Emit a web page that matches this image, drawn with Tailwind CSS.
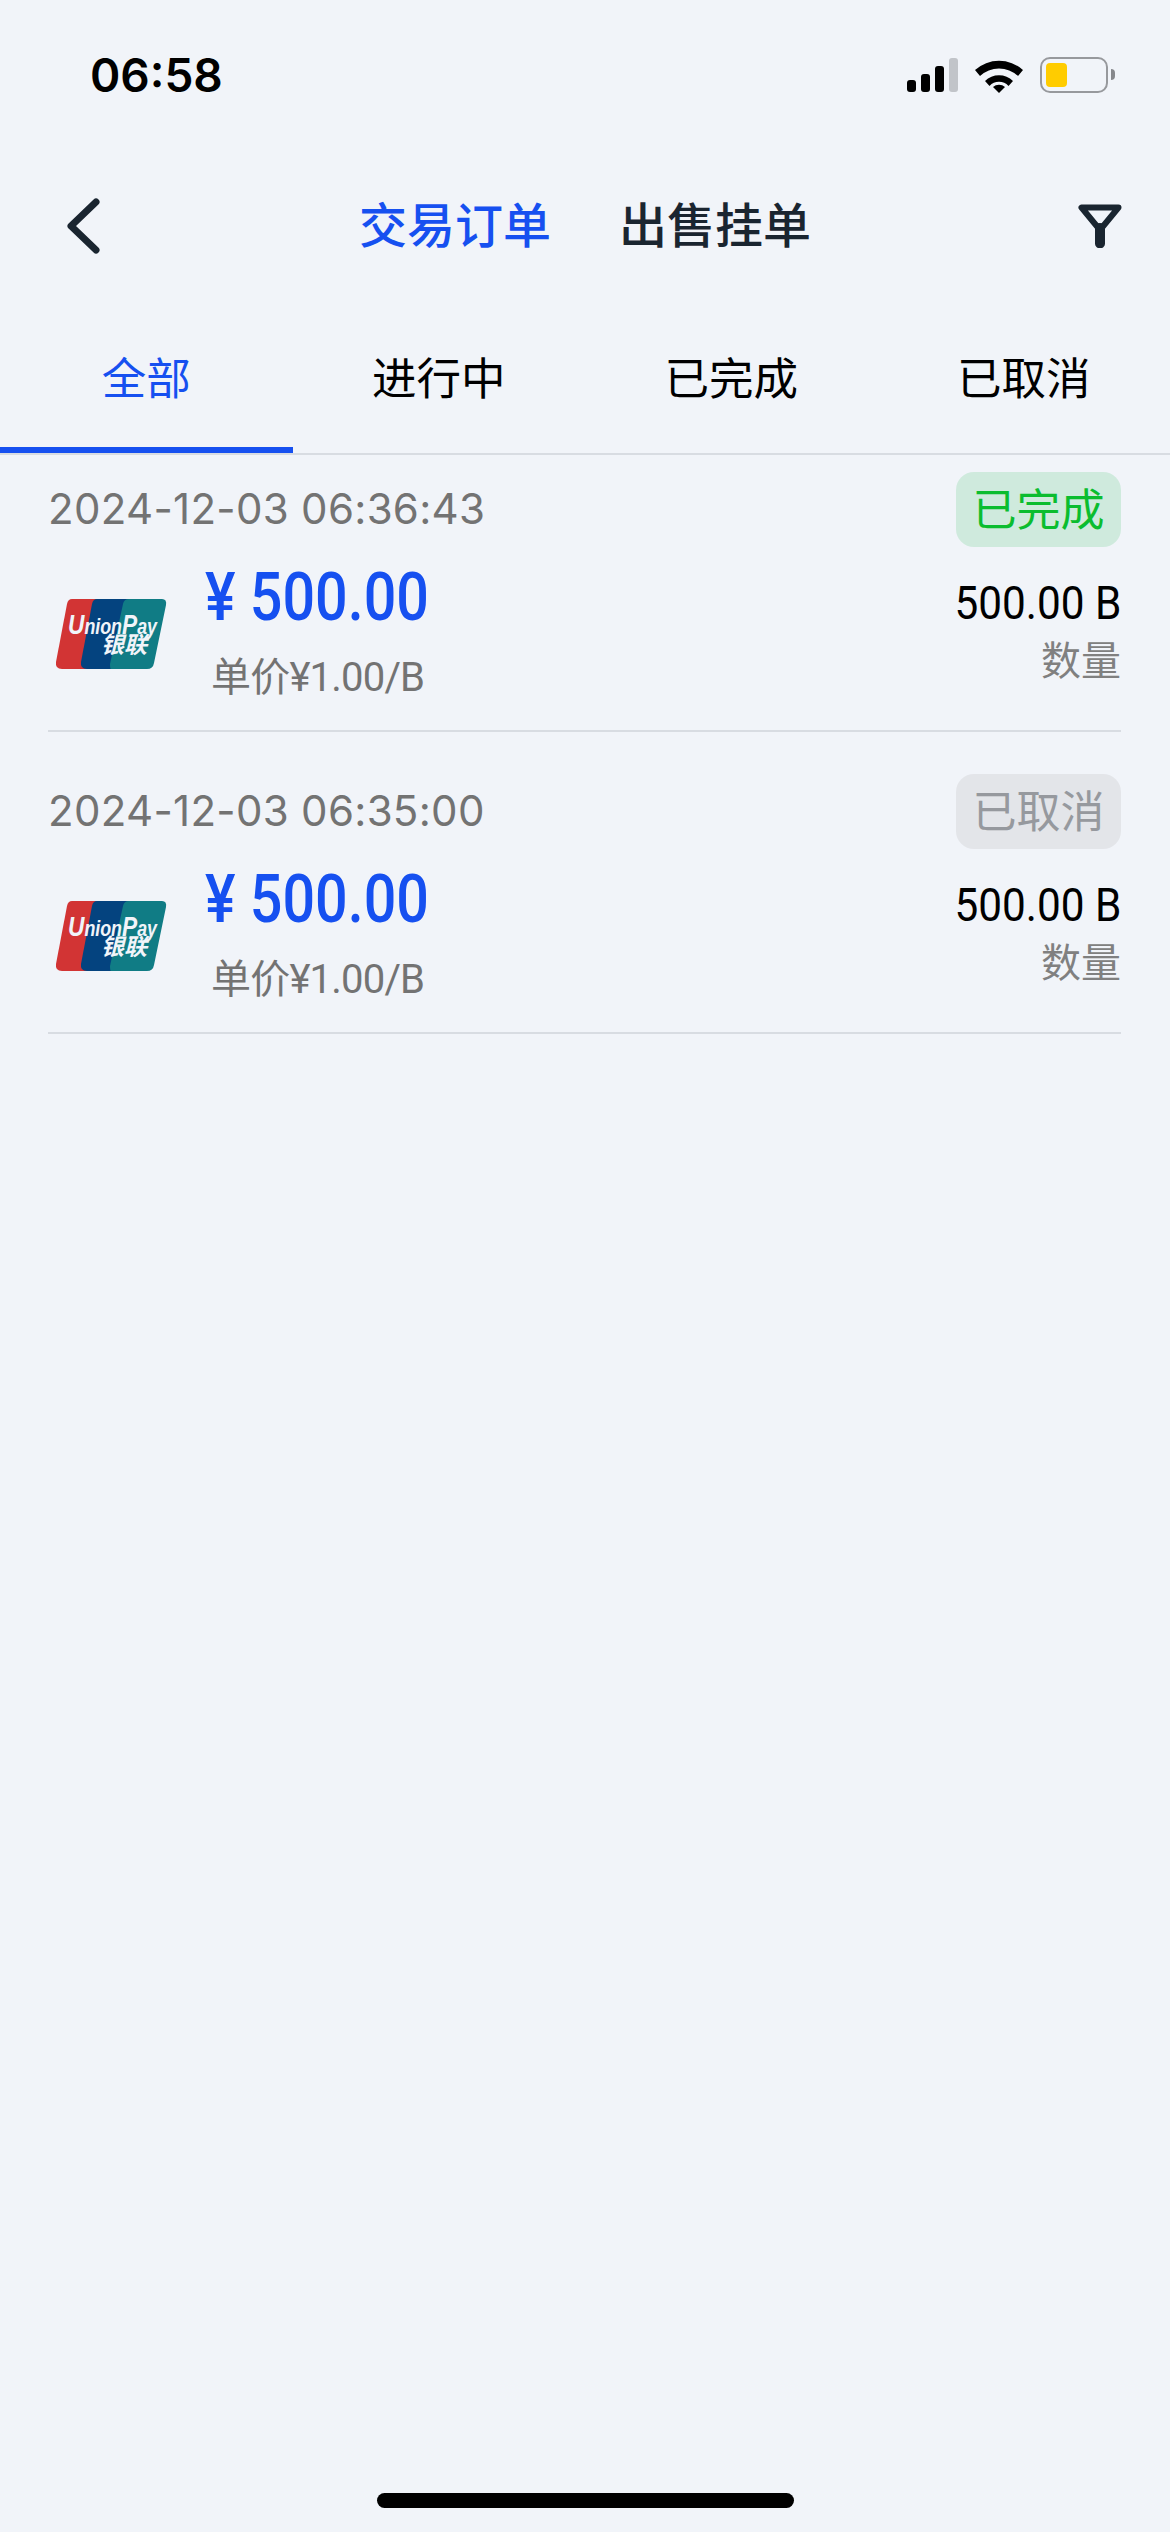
<!DOCTYPE html>
<html lang="zh-CN">
<head>
    <meta charset="UTF-8">
    <meta name="viewport" content="width=device-width, initial-scale=1.0">
    <title>交易订单</title>
    <script src="https://cdn.jsdelivr.net/npm/@tailwindcss/browser@4"></script>
</head>
<body class="relative w-[1170px] h-[2532px] overflow-hidden bg-[#f1f4f9] font-['Inter','Noto_Sans_CJK_SC',sans-serif]">

    <!-- 状态栏 -->
    <div class="flex items-center justify-between h-[150px] pl-[90px] pr-[55px] pb-[1px]">
        <span class="text-[46px] leading-none font-semibold text-black">06:58</span>
        <div class="flex items-center">
            <svg width="51" height="34" viewBox="0 0 51 34">
                <rect x="0" y="22" width="9" height="12" rx="3" fill="#000"/>
                <rect x="14" y="16" width="9" height="18" rx="3" fill="#000"/>
                <rect x="28" y="8" width="9" height="26" rx="3" fill="#000"/>
                <rect x="42" y="0" width="9" height="34" rx="3" fill="#c1c4c9"/>
            </svg>
            <svg class="ml-[17px]" width="48" height="36" viewBox="0 0 48 36">
                <path d="M0 13A36 36 0 0 1 48 13L43 19A28 28 0 0 0 5 19Z" fill="#000"/>
                <path d="M10 24A20 20 0 0 1 38 24L33.500 29A13 13 0 0 0 14.500 29Z" fill="#000"/>
                <path d="M24 36L18 30A9 9 0 0 1 30 30Z" fill="#000"/>
            </svg>
            <div class="flex items-center ml-[17px]">
                <div class="w-[68px] h-[36px] pl-[4px] py-[4px] border-[2px] border-[#97999d] rounded-[10px]">
                    <div class="w-[21px] h-full bg-[#ffcc00] rounded-[4px]"></div>
                </div>
                <div class="w-[4px] h-[11px] ml-[3px] bg-[#86888c] rounded-r-full"></div>
            </div>
        </div>
    </div>

    <!-- 标题栏 -->
    <div class="grid grid-cols-[1fr_auto_1fr] items-center h-[152px] pl-[67px] pr-[48px]">
        <svg width="33" height="56" viewBox="0 0 33 56" fill="none" stroke="#1a2530" stroke-width="7" stroke-linecap="round" stroke-linejoin="round">
            <path d="M29 4L4 28L29 52"/>
        </svg>
        <div class="flex items-center gap-[68px] mr-[19px] text-[48px] leading-none font-medium">
            <span class="text-[#1650f0]">交易订单</span>
            <span class="text-[#1a2530]">出售挂单</span>
        </div>
        <svg class="justify-self-end" width="44" height="44" viewBox="0 0 44 44" fill="none" stroke="#1a2530" stroke-width="6" stroke-linejoin="round" stroke-linecap="round">
            <path d="M3.500 3.500H40.500L22 26z"/>
            <path d="M22 24V39.500" stroke-width="10"/>
        </svg>
    </div>

    <!-- 状态筛选 -->
    <div class="grid grid-cols-4 h-[153px] border-b-[2px] border-[#d8dce2] text-[44.5px] text-black">
        <div class="flex items-center justify-center pt-[10px] border-b-[6px] border-[#1650f0] text-[#1650f0]">全部</div>
        <div class="flex items-center justify-center pt-[4px]">进行中</div>
        <div class="flex items-center justify-center pt-[4px]">已完成</div>
        <div class="flex items-center justify-center pt-[4px]">已取消</div>
    </div>

    <!-- 订单列表 -->
    <div class="pl-[48px] pr-[49px]">
        <div class="h-[277px] pt-[17px] border-b-[2px] border-[#d8dce2]">
            <div class="flex items-center justify-between">
                <span class="mb-[2px] text-[42px] leading-none tracking-[0.3px] text-[#737373]">2024-12-03 06:36:43</span>
                <span class="flex items-center justify-center w-[165px] h-[75px] rounded-[18px] bg-[#cfeadd] text-[44px] text-[#0bbd2f]">已完成</span>
            </div>
            <div class="flex items-start justify-between mt-[16px]">
                <div class="flex items-start">
                    <svg class="mt-[35px] ml-[7px] overflow-visible" width="112" height="72" viewBox="0 0 112 72">
                        <path d="M17 1H52L37 71H7Q0 71 1 64L12 6Q13 1 17 1Z" fill="#d23434"/>
                        <path d="M42 1H78L62 71H32Q25 71 26 64L37 6Q38 1 42 1Z" fill="#04437f"/>
                        <path d="M74 1H107Q112 1 111 7L99 65Q98 71 92 71H56Q55 71 55 66L68 6Q69 1 74 1Z" fill="#107c85"/>
                        <text x="13" y="36" fill="#f1f4f9" font-family="Liberation Sans" font-size="22" font-weight="700" font-style="italic" textLength="89" lengthAdjust="spacingAndGlyphs"><tspan font-size="28">U</tspan>nion<tspan font-size="28">P</tspan>ay</text>
                        <text x="46" y="55" fill="#f1f4f9" font-family="Noto Sans CJK SC" font-size="23" font-weight="700" font-style="italic">银联</text>
                    </svg>
                    <div class="ml-[38px]">
                        <div class="text-[66px] leading-none font-medium text-[#1650f0] font-['Roboto',sans-serif] scale-x-[0.87] origin-left mt-[2px] whitespace-nowrap">¥ 500.00</div>
                        <div class="text-[40px] leading-none tracking-[-0.8px] text-[#737373] font-['Roboto','Noto_Sans_CJK_SC',sans-serif] mt-[27px] ml-[6px]">单价¥1.00/B</div>
                    </div>
                </div>
                <div class="text-right">
                    <div class="text-[46px] leading-none font-[450] font-['Roboto',sans-serif] text-black scale-x-[0.92] origin-right mt-[17px] whitespace-nowrap">500.00 B</div>
                    <div class="text-[40px] leading-none text-[#808080] mt-[15px]">数量</div>
                </div>
            </div>
        </div>

        <div class="h-[302px] pt-[42px] border-b-[2px] border-[#d8dce2]">
            <div class="flex items-center justify-between">
                <span class="mb-[2px] text-[42px] leading-none tracking-[0.3px] text-[#737373]">2024-12-03 06:35:00</span>
                <span class="flex items-center justify-center w-[165px] h-[75px] rounded-[18px] bg-[#e3e5e9] text-[44px] text-[#96999e]">已取消</span>
            </div>
            <div class="flex items-start justify-between mt-[16px]">
                <div class="flex items-start">
                    <svg class="mt-[35px] ml-[7px] overflow-visible" width="112" height="72" viewBox="0 0 112 72">
                        <path d="M17 1H52L37 71H7Q0 71 1 64L12 6Q13 1 17 1Z" fill="#d23434"/>
                        <path d="M42 1H78L62 71H32Q25 71 26 64L37 6Q38 1 42 1Z" fill="#04437f"/>
                        <path d="M74 1H107Q112 1 111 7L99 65Q98 71 92 71H56Q55 71 55 66L68 6Q69 1 74 1Z" fill="#107c85"/>
                        <text x="13" y="36" fill="#f1f4f9" font-family="Liberation Sans" font-size="22" font-weight="700" font-style="italic" textLength="89" lengthAdjust="spacingAndGlyphs"><tspan font-size="28">U</tspan>nion<tspan font-size="28">P</tspan>ay</text>
                        <text x="46" y="55" fill="#f1f4f9" font-family="Noto Sans CJK SC" font-size="23" font-weight="700" font-style="italic">银联</text>
                    </svg>
                    <div class="ml-[38px]">
                        <div class="text-[66px] leading-none font-medium text-[#1650f0] font-['Roboto',sans-serif] scale-x-[0.87] origin-left mt-[2px] whitespace-nowrap">¥ 500.00</div>
                        <div class="text-[40px] leading-none tracking-[-0.8px] text-[#737373] font-['Roboto','Noto_Sans_CJK_SC',sans-serif] mt-[27px] ml-[6px]">单价¥1.00/B</div>
                    </div>
                </div>
                <div class="text-right">
                    <div class="text-[46px] leading-none font-[450] font-['Roboto',sans-serif] text-black scale-x-[0.92] origin-right mt-[17px] whitespace-nowrap">500.00 B</div>
                    <div class="text-[40px] leading-none text-[#808080] mt-[15px]">数量</div>
                </div>
            </div>
        </div>
    </div>

    <!-- Home 指示条 -->
    <div class="absolute left-[377px] top-[2493px] w-[417px] h-[15px] rounded-full bg-black"></div>
</body>
</html>
